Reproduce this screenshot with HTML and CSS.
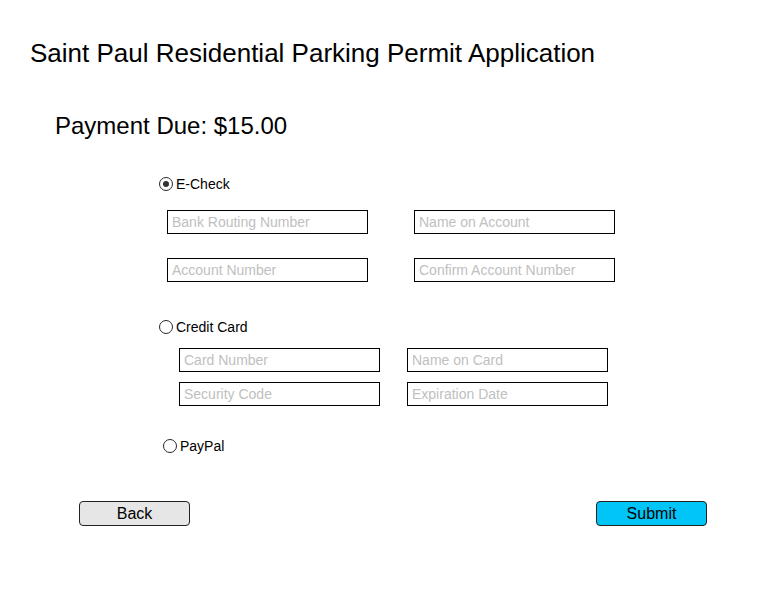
FILE: index.html
```html
<!DOCTYPE html>
<html lang="en">
<head>
<meta charset="utf-8">
<title>Payment</title>
<link rel="stylesheet" href="styles.css">
</head>
<body>
<div class="page">
  <h1 class="title">Saint Paul Residential Parking Permit Application</h1>
  <h2 class="due">Payment Due: $15.00</h2>

  <label class="option option-echeck">
    <input type="radio" name="pay" class="radio" checked>
    <span>E-Check</span>
  </label>
  <div class="fields fields-echeck">
    <input class="field" type="text" placeholder="Bank Routing Number">
    <input class="field" type="text" placeholder="Name on Account">
    <input class="field" type="text" placeholder="Account Number">
    <input class="field" type="text" placeholder="Confirm Account Number">
  </div>

  <label class="option option-card">
    <input type="radio" name="pay" class="radio">
    <span>Credit Card</span>
  </label>
  <div class="fields fields-card">
    <input class="field" type="text" placeholder="Card Number">
    <input class="field" type="text" placeholder="Name on Card">
    <input class="field" type="text" placeholder="Security Code">
    <input class="field" type="text" placeholder="Expiration Date">
  </div>

  <label class="option option-paypal">
    <input type="radio" name="pay" class="radio">
    <span>PayPal</span>
  </label>

  <div class="actions">
    <button class="btn btn-back" type="button">Back</button>
    <button class="btn btn-submit" type="button">Submit</button>
  </div>
</div>
</body>
</html>
```

FILE: styles.css
```css
* { box-sizing: border-box; }

html, body {
  margin: 0;
  padding: 0;
  background: #fff;
}

body {
  font-family: "Liberation Sans", Arial, sans-serif;
  color: #000;
}

.page {
  padding-top: 38px;
}

.title {
  margin: 0 0 0 30px;
  font-size: 26px;
  line-height: 30px;
  font-weight: normal;
}

.due {
  margin: 44px 0 0 55px;
  font-size: 24px;
  line-height: 28px;
  font-weight: normal;
}

.option {
  display: flex;
  align-items: center;
  gap: 3px;
  font-size: 14px;
  line-height: 16px;
  height: 16px;
}

.option-echeck { margin: 36px 0 0 159px; }
.option-card { margin: 37px 0 0 159px; }
.option-paypal { margin: 32px 0 0 163px; }

.radio {
  appearance: none;
  -webkit-appearance: none;
  margin: 0;
  width: 14px;
  height: 14px;
  border: 1.2px solid #2a2a2a;
  border-radius: 50%;
  background: #fff;
  display: grid;
  place-items: center;
  flex: none;
}

.radio:checked::before {
  content: "";
  width: 6px;
  height: 6px;
  border-radius: 50%;
  background: #333;
}

.fields {
  display: grid;
  grid-template-columns: 201px 201px;
}

.fields-echeck {
  margin: 18px 0 0 167px;
  column-gap: 46px;
  row-gap: 24px;
}

.fields-card {
  margin: 13px 0 0 179px;
  column-gap: 27px;
  row-gap: 10px;
}

.field {
  width: 201px;
  height: 24px;
  margin: 0;
  border: 1px solid #000;
  border-radius: 0;
  padding: 0 4px;
  font-family: "Liberation Sans", Arial, sans-serif;
  font-size: 14px;
  background: #fff;
  outline: none;
}

.field::placeholder {
  color: #c0c0c0;
}

.actions {
  margin: 47px 0 0 79px;
  width: 628px;
  display: flex;
  justify-content: space-between;
}

.btn {
  width: 111px;
  height: 25px;
  border: 1px solid #222;
  border-radius: 4px;
  font-family: "Liberation Sans", Arial, sans-serif;
  font-size: 16px;
  line-height: 23px;
  padding: 0;
  color: #000;
}

.btn-back { background: #e6e6e6; }
.btn-submit { background: #00c5f6; }
```
